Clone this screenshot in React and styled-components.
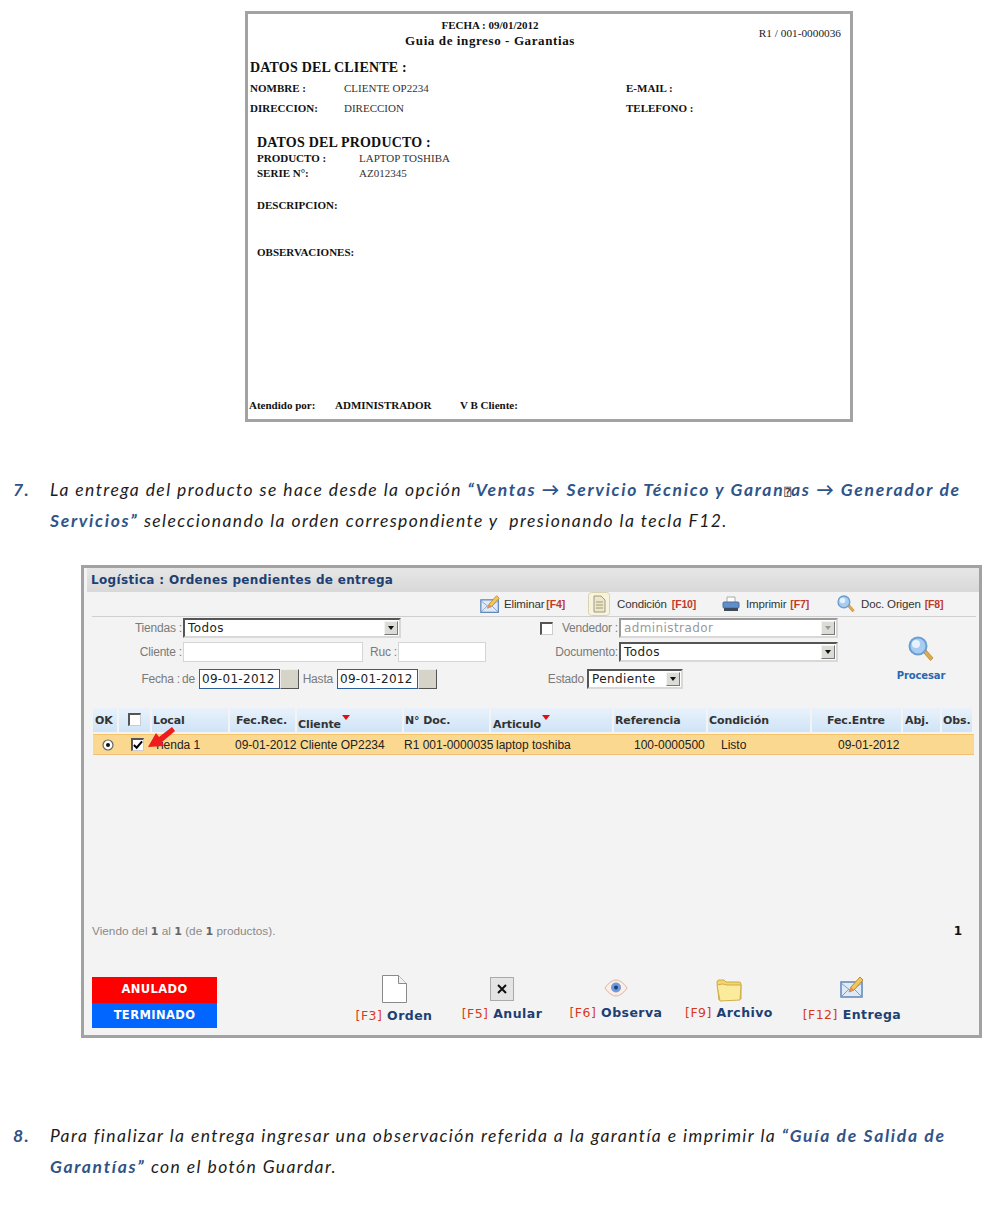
import React from "react";
import styled, { createGlobalStyle } from "styled-components";

const Global = createGlobalStyle`
  html, body { margin: 0; padding: 0; background: #fff; }
  body { font-family: "Liberation Sans", sans-serif; }
  #root { width: 1000px; height: 1211px; overflow: hidden; }
`;

const Page = styled.div`
  display: flex;
  flex-direction: column;
  padding-top: 11px;
`;

/* ---------- printed guide ---------- */
const Sheet = styled.section`
  box-sizing: border-box;
  width: 608px;
  height: 411px;
  margin-left: 245px;
  border: 3px solid #a3a3a3;
  background: #fff;
  color: #111;
  font-family: "Liberation Serif", serif;
  display: flex;
  flex-direction: column;
`;
const SheetHead = styled.header`
  display: flex;
  justify-content: space-between;
  align-items: center;
  height: 38px;
`;
const SheetTitle = styled.div`
  width: 484px;
  text-align: center;
  padding-top: 2px;
`;
const SheetDate = styled.div`
  font-size: 11px;
  font-weight: 700;
  line-height: 13px;
`;
const SheetName = styled.div`
  font-size: 13px;
  font-weight: 700;
  letter-spacing: 0.6px;
  line-height: 17px;
`;
const SheetRef = styled.div`
  font-size: 11.3px;
  margin-right: 9px;
  color: #222;
`;
const SectionHead = styled.h2`
  margin: ${(p) => p.$top || 0}px 0 ${(p) => p.$bottom || 0}px;
  font-size: 14px;
  font-weight: 700;
  line-height: 18px;
  letter-spacing: 0.2px;
  padding-left: ${(p) => p.$indent || 2}px;
`;
const FieldRow = styled.div`
  display: grid;
  grid-template-columns: ${(p) => p.$cols};
  font-size: 11px;
  line-height: ${(p) => p.$line || 20}px;
  padding-left: ${(p) => p.$indent || 2}px;
`;
const FieldLabel = styled.span`
  font-weight: 700;
`;
const FieldValue = styled.span`
  color: #333;
`;
const SoloLabel = styled.div`
  font-size: 11px;
  font-weight: 700;
  line-height: 14px;
  padding-left: 9px;
  margin-top: ${(p) => p.$top}px;
`;
const SignRow = styled.div`
  margin-top: auto;
  margin-bottom: 7px;
  padding-left: 1px;
  display: flex;
  font-size: 11px;
  font-weight: 700;
  line-height: 14px;
`;
const SignItem = styled.span`
  width: ${(p) => p.$w}px;
`;

/* ---------- numbered paragraph ---------- */
const Step = styled.div`
  display: flex;
  margin-top: ${(p) => p.$top}px;
  font-family: "Lato", sans-serif;
  font-style: italic;
  font-size: 17.5px;
  line-height: 31px;
  letter-spacing: 1.42px;
  color: #1c1c1c;
  white-space: nowrap;
`;
const StepNum = styled.span`
  width: 37px;
  margin-left: 13px;
  font-weight: 700;
  color: #2f5488;
`;
const StepLink = styled.b`
  color: #2f5488;
  font-weight: 700;
  letter-spacing: 1.7px;
`;
const Missing = styled.span`
  font-family: "DejaVu Sans Mono", monospace;
  font-style: normal;
  font-size: 11px;
  line-height: 0;
  letter-spacing: 0;
  color: #444;
`;

/* ---------- application window ---------- */
const Win = styled.section`
  box-sizing: border-box;
  width: 901px;
  height: 473px;
  margin: 29px 0 0 81px;
  border: 3px solid #a2a2a2;
  background: #f3f3f3;
  font-family: "Liberation Sans", sans-serif;
  display: flex;
  flex-direction: column;
`;
const WinTitle = styled.h1`
  margin: 0 0 0 3px;
  height: 24px;
  line-height: 24px;
  padding-left: 4px;
  background: linear-gradient(#e6e6e6, #d8d8d8);
  font-family: "DejaVu Sans", sans-serif;
  font-size: 12px;
  font-weight: 700;
  letter-spacing: 0.33px;
  color: #1d3f72;
  white-space: nowrap;
`;
const Toolbar = styled.div`
  display: flex;
  align-items: center;
  height: 24px;
  margin: 0 3px 0 8px;
  border-bottom: 1px solid #cfcfcf;
  padding-left: 388px;
  white-space: nowrap;
`;
const Tool = styled.div`
  display: flex;
  align-items: center;
  width: ${(p) => p.$w}px;
  gap: ${(p) => p.$gap}px;
  font-size: 11.5px;
  color: #333;
  letter-spacing: -0.15px;
`;
const Key = styled.span`
  color: #c0392b;
  font-weight: 700;
  font-size: 10.5px;
  margin-left: -2px;
`;

const FormArea = styled.div`
  display: flex;
  height: 91px;
  padding-left: 8px;
  font-size: 12px;
  color: #7a7a7a;
`;
const FormCol = styled.div`
  display: flex;
  flex-direction: column;
  flex: none;
  width: ${(p) => p.$w}px;
`;
const FormRow = styled.div`
  display: flex;
  align-items: center;
  height: 20px;
  margin-top: ${(p) => p.$top}px;
  white-space: nowrap;
`;
const Label = styled.span`
  width: ${(p) => p.$w}px;
  margin-right: ${(p) => p.$mr || 0}px;
  text-align: right;
  letter-spacing: ${(p) => p.$ls || -0.2}px;
`;
const Select = styled.div`
  box-sizing: border-box;
  width: ${(p) => p.$w}px;
  height: 20px;
  display: flex;
  align-items: center;
  justify-content: space-between;
  padding: 0 1px 0 3px;
  background: #fff;
  border: 2px solid;
  border-color: ${(p) => (p.$off ? "#9a9a9a #d8d8d8 #d8d8d8 #9a9a9a" : "#555 #d8d8d8 #d8d8d8 #555")};
  font-family: "DejaVu Sans", sans-serif;
  font-size: 12px;
  letter-spacing: 0.4px;
  color: ${(p) => (p.$off ? "#9a9a9a" : "#222")};
`;
const Caret = styled.span`
  width: 14px;
  height: 14px;
  box-sizing: border-box;
  display: flex;
  align-items: center;
  justify-content: center;
  background: #dcdcd6;
  border: 1px solid;
  border-color: #f4f4f4 #777 #777 #f4f4f4;
  &::after {
    content: "";
    border: 3px solid transparent;
    border-top: 4px solid ${(p) => (p.$off ? "#999" : "#111")};
    border-bottom: 0;
  }
`;
const TextBox = styled.div`
  box-sizing: border-box;
  width: ${(p) => p.$w}px;
  height: 20px;
  background: #fff;
  border: 1px solid #d5d5d5;
`;
const DateBox = styled.div`
  box-sizing: border-box;
  width: 81px;
  height: 20px;
  line-height: 18px;
  padding-left: 2px;
  background: #fff;
  border: 1px solid #2a5f9e;
  font-family: "DejaVu Sans", sans-serif;
  font-size: 12px;
  letter-spacing: 0.3px;
  color: #222;
`;
const DateBtn = styled.div`
  box-sizing: border-box;
  width: 19px;
  height: 20px;
  background: #d6d3c9;
  border: 1px solid;
  border-color: #eee #555 #555 #eee;
`;
const Check = styled.span`
  box-sizing: border-box;
  display: inline-flex;
  align-items: center;
  justify-content: center;
  width: 13px;
  height: 13px;
  background: #fff;
  border: 1px solid;
  border-width: 2px 1px 1px 2px;
  border-color: #555 #ccc #ccc #555;
`;
const Process = styled.div`
  display: flex;
  flex-direction: column;
  align-items: center;
  flex: none;
  width: 56px;
  margin-top: 19px;
  font-family: "DejaVu Sans", sans-serif;
  font-size: 10px;
  font-weight: 700;
  letter-spacing: -0.1px;
  color: #2668b0;
  gap: 8px;
`;

const cols = "26px 33px 78px 67px 107px 87px 123px 94px 104px 91px 39px 32px";
const HeadRow = styled.div`
  display: grid;
  grid-template-columns: ${cols};
  margin-left: 9px;
  height: 24px;
`;
const HeadCell = styled.div`
  box-sizing: border-box;
  margin-right: 2px;
  padding-left: ${(p) => p.$pad ?? 1}px;
  padding-top: ${(p) => (p.$low ? 10 : p.$box ? 5 : 6)}px;
  display: flex;
  overflow: hidden;
  background: linear-gradient(#e9f2fb, #cfe4f7);
  font-family: "DejaVu Sans", sans-serif;
  font-size: 11px;
  line-height: 13px;
  font-weight: 700;
  letter-spacing: -0.1px;
  color: #333;
  white-space: nowrap;
`;
const SortMark = styled.span`
  width: 0;
  height: 0;
  margin: -3px 0 0 1px;
  border: 4px solid transparent;
  border-top: 5px solid #e01010;
  border-bottom: 0;
`;
const DataRow = styled.div`
  position: relative;
  display: grid;
  grid-template-columns: ${cols};
  width: 881px;
  margin: 2px 0 0 9px;
  height: 21px;
  align-items: center;
  background: #fbd88f;
  border-top: 1px solid #f5c468;
  border-bottom: 1px solid #f0c078;
  box-sizing: border-box;
  font-size: 12px;
  color: #222;
  white-space: nowrap;
`;
const DataCell = styled.div`
  padding-left: ${(p) => p.$pad || 0}px;
  display: flex;
  align-items: center;
`;
const ArrowWrap = styled.svg`
  position: absolute;
  left: 51px;
  top: -11px;
`;

const Spacer = styled.div`
  flex: 1;
`;
const Pager = styled.div`
  display: flex;
  justify-content: space-between;
  align-items: center;
  padding: 0 17px 0 8px;
  font-size: 11.8px;
  color: #8a8a8a;
`;
const PagerNum = styled.b`
  font-family: "DejaVu Sans", sans-serif;
  font-size: 11px;
  color: #666;
`;
const PagerPage = styled.b`
  font-family: "DejaVu Sans", sans-serif;
  font-size: 12px;
  color: #111;
`;
const Bottom = styled.div`
  display: flex;
  margin: 39px 0 7px 8px;
  height: 51px;
`;
const Legend = styled.div`
  display: flex;
  flex-direction: column;
  flex: none;
  width: 125px;
  font-family: "DejaVu Sans", sans-serif;
  font-size: 11.5px;
  font-weight: 700;
  letter-spacing: 0.4px;
  color: #fff;
  text-align: center;
`;
const LegendRow = styled.div`
  height: 25.5px;
  line-height: 25px;
  background: ${(p) => p.$bg};
`;
const Actions = styled.div`
  display: flex;
  padding-left: 123px;
`;
const Action = styled.div`
  display: flex;
  flex-direction: column;
  align-items: center;
  flex: none;
  width: ${(p) => p.$w}px;
`;
const ActionIcon = styled.div`
  height: ${(p) => p.$h}px;
  margin-top: ${(p) => p.$shift || 0}px;
  display: flex;
  align-items: flex-start;
  justify-content: center;
`;
const ActionText = styled.div`
  font-family: "DejaVu Sans", sans-serif;
  font-size: 12.5px;
  line-height: 15px;
  font-weight: 700;
  letter-spacing: 0.45px;
  color: #1d3f72;
  white-space: nowrap;
`;
const ActionKey = styled.span`
  color: #d8391c;
  font-weight: 400;
`;
const CloseBox = styled.div`
  box-sizing: border-box;
  width: 24px;
  height: 24px;
  background: #e4e4e4;
  border: 1px solid #aaa;
  display: flex;
  align-items: center;
  justify-content: center;
`;

/* ---------- icons ---------- */
const MailPen = ({ s = 20 }) => (
  <svg width={s} height={s} viewBox="0 0 24 24">
    <rect x="1" y="7" width="21" height="15" fill="#dfeaf6" stroke="#5f86bb" strokeWidth="1.5" />
    <path d="M1 8l10 8 11-8M1 22l8-8M22 22l-8-8" fill="none" stroke="#7d9fcb" strokeWidth="1" />
    <path d="M9 17l2-5L20 2l3 3-9 10z" fill="#f2c65c" stroke="#c08a2a" strokeWidth="1" />
    <path d="M9 17l2-5 3 3z" fill="#e88f5a" />
  </svg>
);
const NoteIcon = () => (
  <svg width="22" height="24" viewBox="0 0 22 24">
    <rect x=".5" y=".5" width="21" height="23" rx="3" fill="#f7f3df" stroke="#d8d2ae" />
    <path d="M6 4h7l4 4v12H6z" fill="#eee6c4" stroke="#9c9a86" />
    <path d="M8 10h7M8 13h7M8 16h7" stroke="#9c9a86" />
  </svg>
);
const PrinterIcon = () => (
  <svg width="18" height="16" viewBox="0 0 18 16">
    <path d="M5 1h8v6H5z" fill="#fff" stroke="#aaa" />
    <rect x="1" y="6" width="16" height="6" rx="1" fill="#5f8fcb" stroke="#4b6e9e" />
    <rect x="2" y="12" width="14" height="3" fill="#3d4a5c" />
  </svg>
);
const LensIcon = ({ s = 18 }) => (
  <svg width={s} height={s} viewBox="0 0 26 26">
    <path d="M15 16l3-2 7 8-2.5 2.5z" fill="#e0a94a" stroke="#b27d2b" strokeWidth=".7" />
    <circle cx="10" cy="10" r="8.5" fill="#a9cdf0" stroke="#6b9ed2" strokeWidth="2" />
    <circle cx="8" cy="8" r="4" fill="#e7f2fc" />
  </svg>
);
const PageIcon = () => (
  <svg width="25" height="28" viewBox="0 0 25 28">
    <path d="M.5.5h16l8 8v19H.5z" fill="#fff" stroke="#8a8a8a" />
    <path d="M16.5.5v8h8" fill="#f0f0f0" stroke="#8a8a8a" />
  </svg>
);
const EyeIcon = () => (
  <svg width="24" height="18" viewBox="0 0 24 18">
    <path d="M1 9c4-6 8-8 11-8s7 2 11 8c-4 6-8 8-11 8S5 15 1 9z" fill="#fbeee6" stroke="#d9b6a5" />
    <circle cx="12" cy="8.5" r="5" fill="#6f9ad8" />
    <circle cx="12" cy="8.5" r="2" fill="#1f3d78" />
  </svg>
);
const FolderIcon = () => (
  <svg width="26" height="25" viewBox="0 0 26 25">
    <path d="M3 23L1 5q0-2 2-2h5l2 2h13q2 0 2 2v15z" fill="#f4d565" stroke="#c9a94a" />
    <path d="M4 24L1 8q6-2 10 0l14 0-1 15z" fill="#fbeb9d" stroke="#cfae4d" />
  </svg>
);
const Radio = () => (
  <svg width="12" height="12" viewBox="0 0 12 12">
    <circle cx="6" cy="6" r="5" fill="#fff" stroke="#666" strokeWidth="1.2" />
    <circle cx="6" cy="6" r="2" fill="#111" />
  </svg>
);
const Tick = () => (
  <svg width="11" height="10" viewBox="0 0 11 10">
    <path d="M1 5l3 3 6-7" fill="none" stroke="#000" strokeWidth="2.2" />
  </svg>
);

const headers = [
  ["OK", 2], ["", 9], ["Local", 1], ["Fec.Rec.", 6], ["Cliente", 1, true, true], ["N° Doc.", 1],
  ["Articulo", 2, true, true], ["Referencia", 1], ["Condición", 1], ["Fec.Entre", 15], ["Abj.", 2], ["Obs.", 1],
];

export default function App() {
  return (
    <Page>
      <Global />
      <Sheet>
        <SheetHead>
          <SheetTitle>
            <SheetDate>FECHA : 09/01/2012</SheetDate>
            <SheetName>Guia de ingreso - Garantias</SheetName>
          </SheetTitle>
          <SheetRef>R1 / 001-0000036</SheetRef>
        </SheetHead>
        <SectionHead $top={7} $bottom={1}>DATOS DEL CLIENTE :</SectionHead>
        <FieldRow $cols="94px 282px 1fr">
          <FieldLabel>NOMBRE :</FieldLabel>
          <FieldValue>CLIENTE OP2234</FieldValue>
          <FieldLabel>E-MAIL :</FieldLabel>
        </FieldRow>
        <FieldRow $cols="94px 282px 1fr">
          <FieldLabel>DIRECCION:</FieldLabel>
          <FieldValue>DIRECCION</FieldValue>
          <FieldLabel>TELEFONO :</FieldLabel>
        </FieldRow>
        <SectionHead $indent={9} $top={16} $bottom={-1}>DATOS DEL PRODUCTO :</SectionHead>
        <FieldRow $cols="102px 1fr" $indent={9} $line={15}>
          <FieldLabel>PRODUCTO :</FieldLabel>
          <FieldValue>LAPTOP TOSHIBA</FieldValue>
        </FieldRow>
        <FieldRow $cols="102px 1fr" $indent={9} $line={15}>
          <FieldLabel>SERIE N°:</FieldLabel>
          <FieldValue>AZ012345</FieldValue>
        </FieldRow>
        <SoloLabel $top={17}>DESCRIPCION:</SoloLabel>
        <SoloLabel $top={33}>OBSERVACIONES:</SoloLabel>
        <SignRow>
          <SignItem $w={86}>Atendido por:</SignItem>
          <SignItem $w={125}>ADMINISTRADOR</SignItem>
          <SignItem $w={80}>V B Cliente:</SignItem>
        </SignRow>
      </Sheet>

      <Step $top={52}>
        <StepNum>7.</StepNum>
        <span>
          La entrega del producto se hace desde la opción{" "}
          <StepLink>“Ventas → Servicio Técnico y Garan<Missing>⍰</Missing>as → Generador de</StepLink>
          <br />
          <StepLink>Servicios”</StepLink> seleccionando la orden correspondiente y&nbsp; presionando la tecla F12.
        </span>
      </Step>

      <Win>
        <WinTitle>Logística : Ordenes pendientes de entrega</WinTitle>
        <Toolbar>
          <Tool $w={108} $gap={4}><MailPen />Eliminar <Key>[F4]</Key></Tool>
          <Tool $w={134} $gap={7}><NoteIcon />Condición <Key>[F10]</Key></Tool>
          <Tool $w={115} $gap={6}><PrinterIcon />Imprimir<Key>[F7]</Key></Tool>
          <Tool $w={120} $gap={6}><LensIcon />Doc. Origen<Key>[F8]</Key></Tool>
        </Toolbar>
        <FormArea>
          <FormCol $w={448}>
            <FormRow $top={1}>
              <Label $w={90} $mr={1}>Tiendas :</Label>
              <Select $w={218}>Todos<Caret /></Select>
            </FormRow>
            <FormRow $top={4}>
              <Label $w={90} $mr={1}>Cliente :</Label>
              <TextBox $w={180} />
              <Label $w={34} $mr={1}>Ruc :</Label>
              <TextBox $w={88} />
            </FormRow>
            <FormRow $top={7}>
              <Label $w={88} $mr={2}>Fecha :</Label>
              <Label $w={13} $mr={4}>de</Label>
              <DateBox>09-01-2012</DateBox>
              <DateBtn />
              <Label $w={34} $mr={4}>Hasta</Label>
              <DateBox>09-01-2012</DateBox>
              <DateBtn />
            </FormRow>
          </FormCol>
          <FormCol $w={353}>
            <FormRow $top={1}>
              <Check />
              <Label $w={65} $mr={1}>Vendedor :</Label>
              <Select $w={219} $off>administrador<Caret $off /></Select>
            </FormRow>
            <FormRow $top={4}>
              <Label $w={78} $mr={1}>Documento:</Label>
              <Select $w={219}>Todos<Caret /></Select>
            </FormRow>
            <FormRow $top={7}>
              <Label $w={44} $mr={3}>Estado</Label>
              <Select $w={96}>Pendiente<Caret /></Select>
            </FormRow>
          </FormCol>
          <Process>
            <LensIcon s={26} />
            Procesar
          </Process>
        </FormArea>

        <HeadRow>
          {headers.map(([t, pad, low, sort], i) => (
            <HeadCell key={i} $pad={pad} $low={low} $box={i === 1}>
              {i === 1 ? <Check /> : t}
              {sort && <SortMark />}
            </HeadCell>
          ))}
        </HeadRow>
        <DataRow>
          <DataCell $pad={9}><Radio /></DataCell>
          <DataCell $pad={12}><Check><Tick /></Check></DataCell>
          <DataCell $pad={2}>Tienda 1</DataCell>
          <DataCell $pad={5}>09-01-2012</DataCell>
          <DataCell $pad={3}>Cliente OP2234</DataCell>
          <DataCell>R1 001-0000035</DataCell>
          <DataCell $pad={5}>laptop toshiba</DataCell>
          <DataCell $pad={20}>100-0000500</DataCell>
          <DataCell $pad={13}>Listo</DataCell>
          <DataCell $pad={26}>09-01-2012</DataCell>
          <DataCell />
          <DataCell />
          <ArrowWrap width="36" height="26" viewBox="0 0 36 26">
            <path d="M18 18l13-11-3-4-13 10-3-4-8 14 16-1z" fill="#ee1c1c" />
          </ArrowWrap>
        </DataRow>
        <Spacer />
        <Pager>
          <span>
            Viendo del <PagerNum>1</PagerNum> al <PagerNum>1</PagerNum> (de <PagerNum>1</PagerNum> productos).
          </span>
          <PagerPage>1</PagerPage>
        </Pager>
        <Bottom>
          <Legend>
            <LegendRow $bg="#ff0000">ANULADO</LegendRow>
            <LegendRow $bg="#0066ff">TERMINADO</LegendRow>
          </Legend>
          <Actions>
            <Action $w={108}>
              <ActionIcon $h={33} $shift={-2}><PageIcon /></ActionIcon>
              <ActionText><ActionKey>[F3]</ActionKey> Orden</ActionText>
            </Action>
            <Action $w={108}>
              <ActionIcon $h={29}><CloseBox>
                <svg width="10" height="10" viewBox="0 0 10 10"><path d="M1 1l8 8M9 1l-8 8" stroke="#111" strokeWidth="2" /></svg>
              </CloseBox></ActionIcon>
              <ActionText><ActionKey>[F5]</ActionKey> Anular</ActionText>
            </Action>
            <Action $w={120}>
              <ActionIcon $h={26} $shift={2}><EyeIcon /></ActionIcon>
              <ActionText><ActionKey>[F6]</ActionKey> Observa</ActionText>
            </Action>
            <Action $w={106}>
              <ActionIcon $h={28}><FolderIcon /></ActionIcon>
              <ActionText><ActionKey>[F9]</ActionKey> Archivo</ActionText>
            </Action>
            <Action $w={140}>
              <ActionIcon $h={32} $shift={-2}><MailPen s={24} /></ActionIcon>
              <ActionText><ActionKey>[F12]</ActionKey> Entrega</ActionText>
            </Action>
          </Actions>
        </Bottom>
      </Win>

      <Step $top={82}>
        <StepNum>8.</StepNum>
        <span>
          Para finalizar la entrega ingresar una observación referida a la garantía e imprimir la{" "}
          <StepLink>“Guía de Salida de</StepLink>
          <br />
          <StepLink>Garantías”</StepLink> con el botón Guardar.
        </span>
      </Step>
    </Page>
  );
}
